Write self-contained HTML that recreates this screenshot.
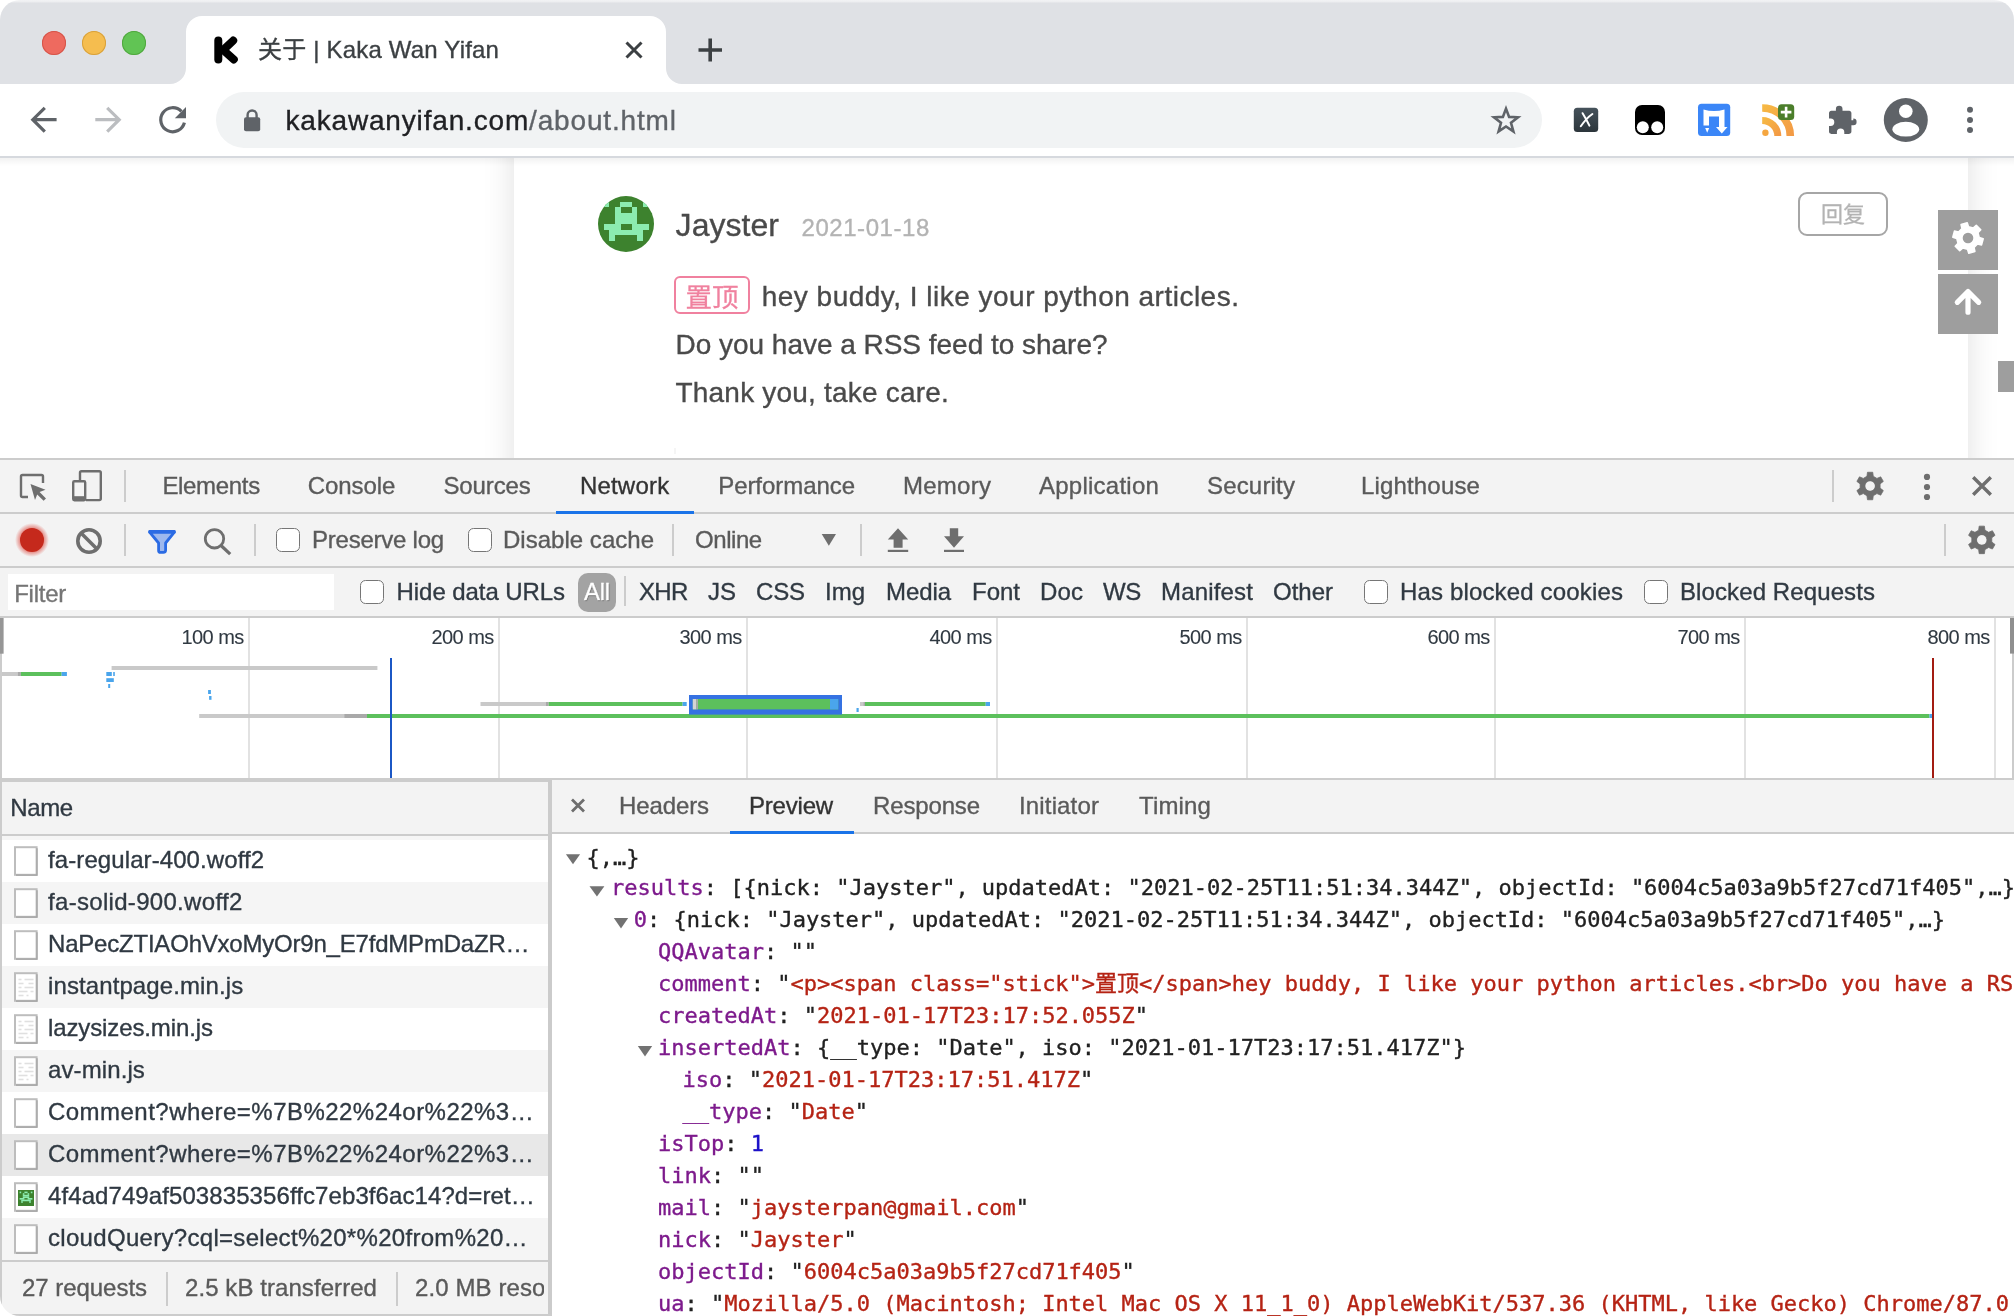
<!DOCTYPE html>
<html lang="zh-CN">
<head>
<meta charset="utf-8">
<title>关于 | Kaka Wan Yifan</title>
<style>
*{box-sizing:border-box;margin:0;padding:0}
html,body{width:2014px;height:1316px;overflow:hidden;background:#fff}
body{position:relative;font-family:"Liberation Sans","Noto Sans CJK SC",sans-serif;color:#333}
.abs{position:absolute}
.t{position:absolute;white-space:nowrap;line-height:1;-webkit-text-stroke:0.35px}
.m{position:absolute;white-space:pre;line-height:1;font-family:"Liberation Mono","Noto Sans CJK SC",monospace;font-size:22px;color:#212121}
.mo{font-family:"DejaVu Sans Mono","Liberation Mono","Noto Sans CJK SC",monospace;white-space:pre}
.k{color:#7d1a8c}.s{color:#b52314}.n{color:#1c10c8}
svg{position:absolute;overflow:visible}
.sep{position:absolute;width:2px;background:#ccc}
.hl{position:absolute;height:2px;background:#ccc;left:0;width:2014px}
.cb{position:absolute;width:24px;height:23.6px;border:1.9px solid #767676;border-radius:5.5px;background:#fff}
.dt{font-size:24px;color:#5a5a5a}
.row{position:absolute;left:2px;width:546px;height:42px}
.ic{position:absolute;left:12px;top:8px;width:24px;height:28px;border:2px solid #c4c4c4;border-radius:2px;background:#fff;box-shadow:1px 1px 0 #ddd}
</style>
</head>
<body>
<!-- ===== browser window chrome ===== -->
<div class="abs" style="left:0;top:0;width:2014px;height:84px;border-radius:20px 20px 0 0;background:linear-gradient(#f2f2f4 0,#eff0f2 1.4px,#dfe1e5 3.2px,#dfe1e5 100%)"></div>
<!-- traffic lights -->
<div class="abs" style="left:42px;top:31px;width:24px;height:24px;border-radius:50%;background:#ee6a5f;box-shadow:inset 0 0 0 1px #d5554a"></div>
<div class="abs" style="left:82px;top:31px;width:24px;height:24px;border-radius:50%;background:#f5bd4f;box-shadow:inset 0 0 0 1px #d8a13c"></div>
<div class="abs" style="left:122px;top:31px;width:24px;height:24px;border-radius:50%;background:#61c454;box-shadow:inset 0 0 0 1px #51a73f"></div>
<!-- active tab -->
<svg style="left:0;top:0" width="2014" height="84" viewBox="0 0 2014 84">
  <path d="M170 84 A16 16 0 0 0 186 68 L186 32 A16 16 0 0 1 202 16 L650 16 A16 16 0 0 1 666 32 L666 68 A16 16 0 0 0 682 84 Z" fill="#fff"/>
  <!-- favicon K -->
  <g stroke="#000" stroke-width="8" stroke-linecap="round" stroke-linejoin="round" fill="none">
    <path d="M218.3 40.4 L218.3 59.4"/>
    <path d="M233.2 40.6 L223.2 50 L233.8 59.4"/>
  </g>
  <!-- tab close -->
  <g stroke="#3c4043" stroke-width="3" stroke-linecap="butt">
    <path d="M626.5 42.5 L641.5 57.5 M641.5 42.5 L626.5 57.5"/>
  </g>
  <!-- new tab plus -->
  <g stroke="#3c4043" stroke-width="3.6">
    <path d="M698.5 50 L722 50 M710.2 38.5 L710.2 61.5"/>
  </g>
</svg>
<!-- toolbar -->
<div class="abs" style="left:0;top:84px;width:2014px;height:72px;background:#fff"></div>
<div class="abs" style="left:0;top:156px;width:2014px;height:2px;background:#d6d9de"></div>
<div class="abs" style="left:0;top:158px;width:2014px;height:7px;background:linear-gradient(rgba(0,0,0,.045),rgba(0,0,0,0))"></div>
<div class="abs" style="left:216px;top:92px;width:1326px;height:56px;border-radius:28px;background:#f1f3f4"></div>
<svg style="left:0;top:84px" width="2014" height="72" viewBox="0 84 2014 72">
  <!-- back -->
  <g stroke="#5f6368" stroke-width="3.2" fill="none" stroke-linecap="butt" stroke-linejoin="miter">
    <path d="M56.6 119.7 L33 119.7 M44.8 107.8 L32.8 119.7 L44.8 131.6"/>
  </g>
  <!-- forward -->
  <g stroke="#bbbdc0" stroke-width="3.2" fill="none">
    <path d="M95.3 119.7 L119 119.7 M107.2 107.8 L119.2 119.7 L107.2 131.6"/>
  </g>
  <!-- reload -->
  <g fill="none" stroke="#5f6368" stroke-width="3.2">
    <path d="M181.4 111.4 A12 12 0 1 0 184.4 122.6"/>
  </g>
  <path d="M186 107 L186 118.2 L174.8 118.2 Z" fill="#5f6368"/>
  <!-- lock -->
  <rect x="244" y="117.2" width="16.2" height="14" rx="2" fill="#5f6368"/>
  <path d="M247.6 118 L247.6 115 A4.5 4.5 0 0 1 256.6 115 L256.6 118" fill="none" stroke="#5f6368" stroke-width="2.4"/>
  <!-- star -->
  <path d="M1506.0 108.6 L1509.1 116.9 L1518.0 117.3 L1511.0 122.8 L1513.4 131.4 L1506.0 126.5 L1498.6 131.4 L1501.0 122.8 L1494.0 117.3 L1502.9 116.9 Z" fill="none" stroke="#5f6368" stroke-width="2.6" stroke-linejoin="miter"/>
  <!-- ext 1: dark X -->
  <defs><linearGradient id="gx" x1="0" y1="0" x2="0" y2="1"><stop offset="0" stop-color="#46525b"/><stop offset="1" stop-color="#2c353b"/></linearGradient>
  <linearGradient id="grss" x1="0" y1="0" x2="1" y2="1"><stop offset="0" stop-color="#f6b844"/><stop offset="1" stop-color="#f39a45"/></linearGradient></defs>
  <rect x="1573.8" y="107.8" width="24.4" height="24.2" rx="3.5" fill="url(#gx)"/>
  <path d="M1580.8 126.3 Q1586.5 118 1592.4 114 M1582.6 113.2 Q1586.5 119.5 1589.4 125.6" stroke="#fff" stroke-width="2" fill="none" stroke-linecap="round"/>
  <!-- ext 2: tampermonkey -->
  <rect x="1635" y="105" width="30" height="30" rx="7" fill="#000"/>
  <circle cx="1642.8" cy="127.2" r="6" fill="#fff"/><circle cx="1657.2" cy="127.2" r="6" fill="#fff"/>
  <!-- ext 3: blue -->
  <rect x="1698" y="103.8" width="32.2" height="32.3" rx="3.5" fill="#3b86f7"/>
  <path d="M1703.5 109.5 Q1714 112.5 1724.5 109.5 L1724.5 127 L1727.5 127 L1721.8 133.5 L1716 127 L1719 127 L1719 116.5 L1709 116.5 L1709 125.5 L1703.5 125.5 Z" fill="#fff"/>
  <path d="M1705.2 128 L1709.2 128 L1707.2 132.8 Z" fill="#fff"/>
  <!-- ext 4: rss -->
  <g fill="none" stroke="url(#grss)">
    <path d="M1762.2 108 A28 28 0 0 1 1790.3 136" stroke-width="7.6"/>
    <path d="M1762.2 120.4 A15.7 15.7 0 0 1 1777.8 136" stroke-width="7"/>
  </g>
  <circle cx="1765.4" cy="132.7" r="3.2" fill="#f5a640"/>
  <rect x="1778" y="104.2" width="16.2" height="15.8" rx="3.5" fill="#4b7e2b"/>
  <path d="M1780.8 112.1 L1791.4 112.1 M1786.1 106.8 L1786.1 117.4" stroke="#fff" stroke-width="2.6"/>
  <!-- puzzle -->
  <path transform="translate(0.8 1.6)" d="M1852.5 118.6 h-1.9 v-7.2 c0 -1.3 -1 -2.3 -2.3 -2.3 h-6.6 v-1.7 a3.3 3.3 0 0 0 -6.6 0 v1.7 h-4.6 c-1.3 0 -2.3 1 -2.3 2.3 v5.6 h1.6 a3.7 3.7 0 0 1 0 7.4 h-1.6 v5.6 c0 1.3 1 2.3 2.3 2.3 h5.6 v-1.6 a3.7 3.7 0 0 1 7.4 0 v1.6 h4.8 c1.3 0 2.3 -1 2.3 -2.3 v-6.4 h1.9 a3.3 3.3 0 0 0 0 -6.6 z" fill="#5f6368"/>
  <!-- profile -->
  <clipPath id="cpf"><circle cx="1905.8" cy="120" r="22"/></clipPath>
  <circle cx="1905.8" cy="120" r="22" fill="#5f6368"/>
  <circle cx="1905.8" cy="111.3" r="6.8" fill="#fff"/>
  <ellipse cx="1905.8" cy="129.2" rx="13.4" ry="7.4" fill="#fff" clip-path="url(#cpf)"/>
  <!-- menu dots -->
  <circle cx="1970" cy="109.8" r="3" fill="#5f6368"/><circle cx="1970" cy="120" r="3" fill="#5f6368"/><circle cx="1970" cy="130.1" r="3" fill="#5f6368"/>
</svg>
<!-- ===== page content ===== -->
<div class="abs" style="left:0;top:158px;width:2014px;height:300px;overflow:hidden;background:#fff;will-change:transform">
  <div class="abs" style="left:514px;top:-40px;width:1454px;height:400px;background:#fff;box-shadow:0 0 30px rgba(0,0,0,.125)"></div>
  <div class="abs" style="left:0;top:0;width:2014px;height:8px;background:linear-gradient(rgba(0,0,0,.05),rgba(0,0,0,0))"></div>
  <!-- avatar -->
  <svg style="left:598px;top:38px" width="56" height="56" viewBox="0 0 56 56">
    <clipPath id="cav"><circle cx="28" cy="28" r="28"/></clipPath>
    <g clip-path="url(#cav)"><rect width="56" height="56" fill="#3d822e"/><g fill="#8cecb0" shape-rendering="crispEdges"><rect x="5.6" y="5.6" width="5.75" height="5.75"/><rect x="22.4" y="5.6" width="11.35" height="5.75"/><rect x="44.8" y="5.6" width="5.75" height="5.75"/><rect x="16.8" y="11.2" width="5.75" height="5.75"/><rect x="33.6" y="11.2" width="5.75" height="5.75"/><rect x="16.8" y="16.8" width="22.55" height="5.75"/><rect x="16.8" y="22.4" width="22.55" height="5.75"/><rect x="5.6" y="28.0" width="16.95" height="5.75"/><rect x="33.6" y="28.0" width="16.95" height="5.75"/><rect x="11.2" y="33.6" width="33.75" height="5.75"/><rect x="11.2" y="39.2" width="5.75" height="5.75"/><rect x="39.2" y="39.2" width="5.75" height="5.75"/></g></g>
  </svg>
  <!-- sticky badge -->
  <div class="abs" style="left:674.4px;top:118.4px;width:75.4px;height:37.2px;border:2px solid #f0819f;border-radius:6px;color:#f0819f;font-size:26.5px;line-height:36px;-webkit-text-stroke:0.3px;text-align:center;font-family:'Noto Sans CJK SC',sans-serif;font-weight:400;-webkit-text-stroke:0.3px">置顶</div>
  <!-- reply button -->
  <div class="abs" style="left:1798px;top:34px;width:90px;height:44px;border:2px solid #a6a6a6;border-radius:9px;color:#b3b3b3;font-size:22px;line-height:36px;-webkit-text-stroke:0.3px;text-align:center;font-family:'Noto Sans CJK SC',sans-serif">回复</div>
  <!-- side buttons -->
  <div class="abs" style="left:1938px;top:52px;width:60px;height:60px;background:#9e9e9e"></div>
  <div class="abs" style="left:1938px;top:116px;width:60px;height:60px;background:#9e9e9e"></div>
  <svg style="left:1938px;top:52px" width="60" height="124" viewBox="0 0 60 124">
    <path fill="#fff" fill-rule="evenodd" stroke="#fff" stroke-width="1.6" stroke-linejoin="round" d="M41.19 27.53 L45.18 28.80 L43.54 34.90 L39.46 34.00 L36.00 37.46 L36.90 41.54 L30.80 43.18 L29.53 39.19 L24.81 37.93 L21.72 40.75 L17.25 36.28 L20.07 33.19 L18.81 28.47 L14.82 27.20 L16.46 21.10 L20.54 22.00 L24.00 18.54 L23.10 14.46 L29.20 12.82 L30.47 16.81 L35.19 18.07 L38.28 15.25 L42.75 19.72 L39.93 22.81 Z M35.30 28.00 A5.3 5.3 0 1 0 24.70 28.00 A5.3 5.3 0 1 0 35.30 28.00 Z"/>
    <circle cx="30" cy="28" r="5.3" fill="#9e9e9e"/>
    <g stroke="#fff" stroke-width="5.2" fill="none" stroke-linecap="round" stroke-linejoin="round">
      <path d="M30 81.6 L30 102.2 M19.3 92.3 L30 81.6 L40.7 92.3"/>
    </g>
  </svg>
  <!-- page scrollbar thumb -->
  <div class="abs" style="left:1998px;top:202.5px;width:16px;height:31.5px;background:#9e9e9e"></div>
  <div class="abs" style="left:674px;top:290px;width:2px;height:6px;background:#f5f5f5"></div>
</div>
<!-- ===== devtools toolbars ===== -->
<div class="abs" style="left:0;top:458px;width:2014px;height:858px;background:#f3f3f3"></div>
<div class="hl" style="top:458px"></div>
<div class="hl" style="top:512px"></div>
<div class="hl" style="top:566px"></div>
<div class="hl" style="top:616px"></div>
<div class="abs" style="left:556px;top:511px;width:138px;height:3px;background:#1a73e8"></div>
<div class="sep" style="left:124px;top:470px;height:32px"></div>
<div class="sep" style="left:1832px;top:470px;height:32px"></div>
<div class="sep" style="left:124px;top:524px;height:32px"></div>
<div class="sep" style="left:254px;top:524px;height:32px"></div>
<div class="sep" style="left:672px;top:524px;height:32px"></div>
<div class="sep" style="left:860px;top:524px;height:32px"></div>
<div class="sep" style="left:1944px;top:524px;height:32px"></div>
<div class="sep" style="left:624px;top:576px;height:30px"></div>
<svg style="left:0;top:458px" width="2014" height="160" viewBox="0 458 2014 160">
  <!-- inspect -->
  <g fill="none" stroke="#6e6e6e" stroke-width="2.4" stroke-linejoin="round">
    <path d="M28 497 L22.5 497 Q21 497 21 495.5 L21 476.5 Q21 475 22.5 475 L41.5 475 Q43 475 43 476.5 L43 483"/>
  </g>
  <path d="M30.5 484 L45.5 489.8 L39.6 492 L46 498.4 L43.6 500.8 L37.2 494.4 L35 500 Z" fill="#6e6e6e"/>
  <!-- device -->
  <g fill="none" stroke="#6e6e6e" stroke-width="2.4" stroke-linejoin="round">
    <path d="M80 480 L80 472.7 Q80 471.2 81.5 471.2 L99.3 471.2 Q100.8 471.2 100.8 472.7 L100.8 498.6 Q100.8 500.1 99.3 500.1 L86 500.1"/>
    <rect x="73.2" y="481.2" width="12" height="19" rx="1.2"/>
  </g>
  <rect x="73.2" y="496.2" width="12" height="4" fill="#6e6e6e"/>
  <!-- gear / dots / close -->
  <path d="M1873.25 495.70 L1872.72 499.75 L1867.48 499.75 L1866.95 495.70 L1863.27 493.58 L1859.50 495.15 L1856.88 490.60 L1860.12 488.12 L1860.12 483.88 L1856.88 481.40 L1859.50 476.85 L1863.27 478.42 L1866.95 476.30 L1867.48 472.25 L1872.72 472.25 L1873.25 476.30 L1876.93 478.42 L1880.70 476.85 L1883.32 481.40 L1880.08 483.88 L1880.08 488.12 L1883.32 490.60 L1880.70 495.15 L1876.93 493.58 Z M1875.10 486.00 A5 5 0 1 0 1865.10 486.00 A5 5 0 1 0 1875.10 486.00 Z" fill="#6e6e6e" fill-rule="evenodd" stroke="#6e6e6e" stroke-width="0.8" stroke-linejoin="round"/>
  <circle cx="1870.1" cy="486" r="4.6" fill="#f3f3f3"/>
  <circle cx="1927" cy="476.9" r="3.1" fill="#6e6e6e"/><circle cx="1927" cy="487" r="3.1" fill="#6e6e6e"/><circle cx="1927" cy="497" r="3.1" fill="#6e6e6e"/>
  <path d="M1973.2 477.2 L1990.8 494.8 M1990.8 477.2 L1973.2 494.8" stroke="#6e6e6e" stroke-width="3.4" fill="none"/>
  <path d="M1984.95 549.60 L1984.42 553.65 L1979.18 553.65 L1978.65 549.60 L1974.97 547.48 L1971.20 549.05 L1968.58 544.50 L1971.82 542.02 L1971.82 537.78 L1968.58 535.30 L1971.20 530.75 L1974.97 532.32 L1978.65 530.20 L1979.18 526.15 L1984.42 526.15 L1984.95 530.20 L1988.63 532.32 L1992.40 530.75 L1995.02 535.30 L1991.78 537.78 L1991.78 542.02 L1995.02 544.50 L1992.40 549.05 L1988.63 547.48 Z M1986.80 539.90 A5 5 0 1 0 1976.80 539.90 A5 5 0 1 0 1986.80 539.90 Z" fill="#6e6e6e" fill-rule="evenodd" stroke="#6e6e6e" stroke-width="0.8" stroke-linejoin="round"/>
  <circle cx="1981.8" cy="539.9" r="4.6" fill="#f3f3f3"/>
  <!-- record -->
  <defs><radialGradient id="rg"><stop offset="0.68" stop-color="#d93025" stop-opacity=".55"/><stop offset="1" stop-color="#d93025" stop-opacity="0"/></radialGradient></defs>
  <circle cx="32" cy="540" r="17" fill="url(#rg)"/>
  <circle cx="32" cy="540" r="12" fill="#c5291c"/>
  <!-- clear -->
  <circle cx="89" cy="541" r="11.2" fill="none" stroke="#6e6e6e" stroke-width="3.6"/>
  <path d="M81 533 L97 549" stroke="#6e6e6e" stroke-width="3.6"/>
  <!-- filter funnel -->
  <path d="M149.6 532.2 L174.4 532.2 L165.6 543 L165.6 550.4 Q165.4 552.4 163.4 552.4 L160.6 552.4 Q158.6 552.4 158.6 550.4 L158.6 543 Z" fill="#9db8ee" stroke="#2b6be4" stroke-width="2.8" stroke-linejoin="round"/>
  <rect x="148.4" y="530" width="27.2" height="3.6" rx="1" fill="#2b6be4"/>
  <!-- search -->
  <circle cx="214.5" cy="538.8" r="9.2" fill="none" stroke="#6e6e6e" stroke-width="2.8"/>
  <path d="M221 545.5 L230.2 554.2" stroke="#6e6e6e" stroke-width="3.2"/>
  <!-- dropdown -->
  <path d="M821.7 534 L836 534 L828.85 545.8 Z" fill="#6e6e6e"/>
  <!-- upload / download -->
  <path d="M898 528.2 L908.2 539.4 L902.6 539.4 L902.6 547.8 L893.6 547.8 L893.6 539.4 L887.8 539.4 Z" fill="#6e6e6e"/>
  <rect x="887.8" y="549.8" width="20.4" height="2.2" fill="#6e6e6e"/>
  <path d="M949.8 528.2 L958.2 528.2 L958.2 536.2 L964 536.2 L954 547.8 L944 536.2 L949.8 536.2 Z" fill="#6e6e6e"/>
  <rect x="944" y="549.8" width="20" height="2.2" fill="#6e6e6e"/>
</svg>
<!-- checkboxes -->
<div class="cb" style="left:276px;top:528.2px"></div>
<div class="cb" style="left:468px;top:528.2px"></div>
<div class="cb" style="left:360px;top:580.2px"></div>
<div class="cb" style="left:1364px;top:580.2px"></div>
<div class="cb" style="left:1644px;top:580.2px"></div>
<!-- filter input -->
<div class="abs" style="left:8px;top:574px;width:326px;height:36px;background:#fff"></div>
<!-- All pill -->
<div class="abs" style="left:578px;top:572.5px;width:38px;height:39.5px;border-radius:10px;background:#a3a3a3"></div>
<!-- ===== network overview ===== -->
<div class="abs" style="left:0;top:618px;width:2014px;height:160px;background:#fff"></div>
<svg style="left:0;top:618px" width="2014" height="164" viewBox="0 618 2014 164">
<rect x="248" y="618" width="2.0" height="160.0" fill="#e2e2e2"/><rect x="498" y="618" width="2.0" height="160.0" fill="#e2e2e2"/><rect x="746" y="618" width="2.0" height="160.0" fill="#e2e2e2"/><rect x="996" y="618" width="2.0" height="160.0" fill="#e2e2e2"/><rect x="1246" y="618" width="2.0" height="160.0" fill="#e2e2e2"/><rect x="1494" y="618" width="2.0" height="160.0" fill="#e2e2e2"/><rect x="1744" y="618" width="2.0" height="160.0" fill="#e2e2e2"/><rect x="1994" y="618" width="2.0" height="160.0" fill="#e2e2e2"/>
<rect x="111.6" y="666" width="265.8" height="4.0" fill="#c9c9c9"/><rect x="2" y="672" width="15.5" height="4.0" fill="#c9c9c9"/><rect x="17.5" y="672" width="3.4" height="4.0" fill="#a9a9a9"/><rect x="20.9" y="672" width="40.7" height="4.0" fill="#5cc05c"/><rect x="61.6" y="672" width="5.3" height="4.0" fill="#4aa5ec"/><rect x="106.3" y="672" width="5.5" height="4.0" fill="#4aa5ec"/><rect x="113.2" y="672" width="1.6" height="4.0" fill="#4aa5ec"/><rect x="106.3" y="678.2" width="7.5" height="3.8" fill="#4aa5ec"/><rect x="108.2" y="684" width="2.0" height="4.0" fill="#4aa5ec"/><rect x="208.1" y="690" width="2.8" height="4.0" fill="#4aa5ec"/><rect x="209.1" y="696" width="2.4" height="3.8" fill="#4aa5ec"/><rect x="199.2" y="714" width="145.0" height="4.0" fill="#c9c9c9"/><rect x="344.2" y="714" width="22.8" height="4.0" fill="#a9a9a9"/><rect x="367" y="714" width="1562.5" height="4.0" fill="#5cc05c"/><rect x="1929.5" y="714" width="2.5" height="4.0" fill="#4aa5ec"/><rect x="480.5" y="702" width="65.5" height="4.0" fill="#c9c9c9"/><rect x="546" y="702" width="2.7" height="4.0" fill="#a9a9a9"/><rect x="548.7" y="702" width="133.9" height="4.0" fill="#5cc05c"/><rect x="682.6" y="702" width="4.1" height="4.0" fill="#4aa5ec"/><rect x="856.5" y="708" width="2.2" height="4.0" fill="#4aa5ec"/><rect x="860" y="702" width="3.3" height="4.0" fill="#c9c9c9"/><rect x="863.3" y="702" width="1.7" height="4.0" fill="#a9a9a9"/><rect x="865" y="702" width="120.7" height="4.0" fill="#5cc05c"/><rect x="985.7" y="702" width="4.3" height="4.0" fill="#4aa5ec"/>
<rect x="689" y="695" width="153.0" height="19.6" fill="#3572e2"/><rect x="692.8" y="699" width="145.4" height="10.4" fill="#5cc05c"/><rect x="692.8" y="699" width="3.4" height="10.4" fill="#d4d4d4"/><rect x="696.2" y="699" width="1.8" height="10.4" fill="#a9a9a9"/><rect x="830" y="699" width="8.2" height="10.4" fill="#4aa5ec"/>
<rect x="390" y="658" width="2.0" height="120.0" fill="#1b57c5"/>
<rect x="1932" y="658" width="2.0" height="120.0" fill="#a31c12"/>
<rect x="0" y="618" width="2.0" height="164.0" fill="#ccc"/>
<rect x="0" y="618" width="3.6" height="35.7" fill="#969696"/>
<rect x="2012" y="653" width="2" height="125" fill="#ccc"/><rect x="2010" y="618" width="4.0" height="35.6" fill="#8f8f8f"/>
<rect x="0" y="778" width="2014.0" height="2.0" fill="#ccc"/>
<rect x="0" y="780" width="550.0" height="2.0" fill="#ccc"/>
</svg>
<!-- ===== request list ===== -->
<div class="abs" style="left:2px;top:782px;width:546px;height:52px;background:#f3f3f3"></div>
<div class="abs" style="left:2px;top:834px;width:546px;height:2px;background:#ccc"></div>
<div class="abs" style="left:2px;top:836px;width:546px;height:4px;background:#f5f5f5"></div>
<div class="row" style="top:840px;background:#fff"></div><div class="row" style="top:882px;background:#f5f5f5"></div><div class="row" style="top:924px;background:#fff"></div><div class="row" style="top:966px;background:#f5f5f5"></div><div class="row" style="top:1008px;background:#fff"></div><div class="row" style="top:1050px;background:#f5f5f5"></div><div class="row" style="top:1092px;background:#fff"></div><div class="row" style="top:1134px;background:#e8e8e8"></div><div class="row" style="top:1176px;background:#fff"></div><div class="row" style="top:1218px;background:#f5f5f5"></div>
<div class="abs" style="left:0;top:782px;width:2px;height:534px;background:#ccc"></div>
<div class="abs" style="left:548px;top:780px;width:4px;height:536px;background:#cbcbcb"></div>
<div class="abs" style="left:2px;top:1260px;width:546px;height:2px;background:#ccc"></div>
<div class="abs" style="left:2px;top:1262px;width:546px;height:54px;background:#f3f3f3"></div>
<div class="sep" style="left:166px;top:1272px;height:34px"></div>
<div class="sep" style="left:396px;top:1272px;height:34px"></div>
<div class="abs" style="left:0;top:1314px;width:552px;height:2px;background:#ccc"></div>
<svg style="left:0;top:1290px" width="26" height="26" viewBox="0 0 26 26"><path d="M0 6 L0 26 L20 26 A20 20 0 0 1 0 6 Z" fill="#fff"/></svg>
<svg style="left:0;top:836px" width="60" height="430" viewBox="0 836 60 430"><rect x="15" y="847.2" width="21.6" height="27.6" fill="#fff" stroke="#bdbdbd" stroke-width="2"/><path d="M16 875.2 L37.0 875.2 L37.0 848.2" fill="none" stroke="#a2a2a2" stroke-width="1.2"/><rect x="15" y="889.2" width="21.6" height="27.6" fill="#fff" stroke="#bdbdbd" stroke-width="2"/><path d="M16 917.2 L37.0 917.2 L37.0 890.2" fill="none" stroke="#a2a2a2" stroke-width="1.2"/><rect x="15" y="931.2" width="21.6" height="27.6" fill="#fff" stroke="#bdbdbd" stroke-width="2"/><path d="M16 959.2 L37.0 959.2 L37.0 932.2" fill="none" stroke="#a2a2a2" stroke-width="1.2"/><rect x="15" y="973.2" width="21.6" height="27.6" fill="#fff" stroke="#bdbdbd" stroke-width="2"/><path d="M16 1001.2 L37.0 1001.2 L37.0 974.2" fill="none" stroke="#a2a2a2" stroke-width="1.2"/><rect x="18.5" y="978.7" width="3.0" height="1.6" fill="#e0e0e0"/><rect x="24.5" y="978.7" width="9.0" height="1.6" fill="#e0e0e0"/><rect x="18.5" y="982.7" width="5.0" height="1.6" fill="#e0e0e0"/><rect x="28.5" y="982.7" width="5.0" height="1.6" fill="#e0e0e0"/><rect x="18.5" y="986.7" width="3.0" height="1.6" fill="#e0e0e0"/><rect x="24.5" y="986.7" width="9.0" height="1.6" fill="#e0e0e0"/><rect x="18.5" y="990.7" width="9.0" height="1.6" fill="#e0e0e0"/><rect x="30.5" y="990.7" width="3.0" height="1.6" fill="#e0e0e0"/><rect x="18.5" y="994.7" width="5.0" height="1.6" fill="#e0e0e0"/><rect x="26.5" y="994.7" width="2.0" height="1.6" fill="#e0e0e0"/><rect x="15" y="1015.2" width="21.6" height="27.6" fill="#fff" stroke="#bdbdbd" stroke-width="2"/><path d="M16 1043.2 L37.0 1043.2 L37.0 1016.2" fill="none" stroke="#a2a2a2" stroke-width="1.2"/><rect x="18.5" y="1020.7" width="3.0" height="1.6" fill="#e0e0e0"/><rect x="24.5" y="1020.7" width="9.0" height="1.6" fill="#e0e0e0"/><rect x="18.5" y="1024.7" width="5.0" height="1.6" fill="#e0e0e0"/><rect x="28.5" y="1024.7" width="5.0" height="1.6" fill="#e0e0e0"/><rect x="18.5" y="1028.7" width="3.0" height="1.6" fill="#e0e0e0"/><rect x="24.5" y="1028.7" width="9.0" height="1.6" fill="#e0e0e0"/><rect x="18.5" y="1032.7" width="9.0" height="1.6" fill="#e0e0e0"/><rect x="30.5" y="1032.7" width="3.0" height="1.6" fill="#e0e0e0"/><rect x="18.5" y="1036.7" width="5.0" height="1.6" fill="#e0e0e0"/><rect x="26.5" y="1036.7" width="2.0" height="1.6" fill="#e0e0e0"/><rect x="15" y="1057.2" width="21.6" height="27.6" fill="#fff" stroke="#bdbdbd" stroke-width="2"/><path d="M16 1085.2 L37.0 1085.2 L37.0 1058.2" fill="none" stroke="#a2a2a2" stroke-width="1.2"/><rect x="18.5" y="1062.7" width="3.0" height="1.6" fill="#e0e0e0"/><rect x="24.5" y="1062.7" width="9.0" height="1.6" fill="#e0e0e0"/><rect x="18.5" y="1066.7" width="5.0" height="1.6" fill="#e0e0e0"/><rect x="28.5" y="1066.7" width="5.0" height="1.6" fill="#e0e0e0"/><rect x="18.5" y="1070.7" width="3.0" height="1.6" fill="#e0e0e0"/><rect x="24.5" y="1070.7" width="9.0" height="1.6" fill="#e0e0e0"/><rect x="18.5" y="1074.7" width="9.0" height="1.6" fill="#e0e0e0"/><rect x="30.5" y="1074.7" width="3.0" height="1.6" fill="#e0e0e0"/><rect x="18.5" y="1078.7" width="5.0" height="1.6" fill="#e0e0e0"/><rect x="26.5" y="1078.7" width="2.0" height="1.6" fill="#e0e0e0"/><rect x="15" y="1099.2" width="21.6" height="27.6" fill="#fff" stroke="#bdbdbd" stroke-width="2"/><path d="M16 1127.2 L37.0 1127.2 L37.0 1100.2" fill="none" stroke="#a2a2a2" stroke-width="1.2"/><rect x="15" y="1141.2" width="21.6" height="27.6" fill="#fff" stroke="#bdbdbd" stroke-width="2"/><path d="M16 1169.2 L37.0 1169.2 L37.0 1142.2" fill="none" stroke="#a2a2a2" stroke-width="1.2"/><rect x="15" y="1183.2" width="21.6" height="27.6" fill="#fff" stroke="#bdbdbd" stroke-width="2"/><path d="M16 1211.2 L37.0 1211.2 L37.0 1184.2" fill="none" stroke="#a2a2a2" stroke-width="1.2"/><rect x="18" y="1190" width="16" height="16" fill="#3d822e"/><g fill="#8cecb0"><rect x="19.6" y="1191.6" width="1.6" height="1.65"/><rect x="24.4" y="1191.6" width="3.2" height="1.65"/><rect x="30.8" y="1191.6" width="1.6" height="1.65"/><rect x="22.8" y="1193.2" width="1.6" height="1.65"/><rect x="27.6" y="1193.2" width="1.6" height="1.65"/><rect x="22.8" y="1194.8" width="6.4" height="1.65"/><rect x="22.8" y="1196.4" width="6.4" height="1.65"/><rect x="19.6" y="1198.0" width="4.8" height="1.65"/><rect x="27.6" y="1198.0" width="4.8" height="1.65"/><rect x="21.2" y="1199.6" width="9.6" height="1.65"/><rect x="21.2" y="1201.2" width="1.6" height="1.65"/><rect x="29.2" y="1201.2" width="1.6" height="1.65"/></g><rect x="15" y="1225.2" width="21.6" height="27.6" fill="#fff" stroke="#bdbdbd" stroke-width="2"/><path d="M16 1253.2 L37.0 1253.2 L37.0 1226.2" fill="none" stroke="#a2a2a2" stroke-width="1.2"/></svg>
<!-- ===== detail pane ===== -->
<div class="abs" style="left:552px;top:780px;width:1462px;height:52px;background:#f3f3f3"></div>
<div class="abs" style="left:552px;top:832px;width:1462px;height:2px;background:#ccc"></div>
<div class="abs" style="left:730px;top:831px;width:124px;height:3px;background:#1a73e8"></div>
<div class="abs" style="left:552px;top:834px;width:1462px;height:482px;background:#fff"></div>
<svg style="left:552px;top:780px" width="1462" height="536" viewBox="552 780 1462 536">
  <path d="M572 799.4 L584 811.4 M584 799.4 L572 811.4" stroke="#6e6e6e" stroke-width="2.8" fill="none"/>
  <path d="M565.9 854.2 L580.1 854.2 L573.0 864.3 Z" fill="#727272"/><path d="M589.5 886.2 L604.4 886.2 L596.95 896.4 Z" fill="#727272"/><path d="M613.8 918 L628.2 918 L621.0 928.4 Z" fill="#727272"/><path d="M637.8 1046 L652.2 1046 L645.0 1056.4 Z" fill="#727272"/>
</svg>
<!-- ===== text ===== -->
<div class="abs" style="left:0;top:0;width:2014px;height:1316px;will-change:transform">
<div class="t" style="top:37.88px;font-size:24px;color:#3c4043;left:258.00px;letter-spacing:0.192px;">关于 | Kaka Wan Yifan</div>
<div class="t" style="top:106.80px;font-size:28px;color:#202124;left:285.40px;letter-spacing:0.835px;"><span style="color:#202124">kakawanyifan.com</span><span style="color:#5f6368">/about.html</span></div>
<div class="t" style="top:208.81px;font-size:32px;color:#4a4a4a;left:675.60px;letter-spacing:0.040px;">Jayster</div>
<div class="t" style="top:215.58px;font-size:24px;color:#b3b3b3;left:801.50px;letter-spacing:0.551px;">2021-01-18</div>
<div class="t" style="top:283.00px;font-size:28px;color:#4a4a4a;left:761.70px;letter-spacing:0.491px;">hey buddy, I like your python articles.</div>
<div class="t" style="top:331.10px;font-size:28px;color:#4a4a4a;left:675.50px;letter-spacing:-0.023px;">Do you have a RSS feed to share?</div>
<div class="t" style="top:379.10px;font-size:28px;color:#4a4a4a;left:675.50px;letter-spacing:0.207px;">Thank you, take care.</div>
<div class="t" style="top:473.88px;font-size:24px;color:#5a5a5a;left:162.40px;letter-spacing:-0.326px;">Elements</div>
<div class="t" style="top:473.88px;font-size:24px;color:#5a5a5a;left:307.80px;letter-spacing:-0.071px;">Console</div>
<div class="t" style="top:473.88px;font-size:24px;color:#5a5a5a;left:443.40px;letter-spacing:-0.115px;">Sources</div>
<div class="t" style="top:473.88px;font-size:24px;color:#333;left:579.90px;letter-spacing:0.211px;">Network</div>
<div class="t" style="top:473.88px;font-size:24px;color:#5a5a5a;left:718.20px;letter-spacing:-0.056px;">Performance</div>
<div class="t" style="top:473.88px;font-size:24px;color:#5a5a5a;left:903.00px;letter-spacing:0.241px;">Memory</div>
<div class="t" style="top:473.88px;font-size:24px;color:#5a5a5a;left:1039.00px;letter-spacing:0.246px;">Application</div>
<div class="t" style="top:473.88px;font-size:24px;color:#5a5a5a;left:1207.00px;letter-spacing:0.173px;">Security</div>
<div class="t" style="top:473.88px;font-size:24px;color:#5a5a5a;left:1361.00px;letter-spacing:0.164px;">Lighthouse</div>
<div class="t" style="top:527.68px;font-size:24px;color:#5a5a5a;left:312.00px;letter-spacing:-0.238px;">Preserve log</div>
<div class="t" style="top:527.68px;font-size:24px;color:#5a5a5a;left:503.00px;letter-spacing:0.020px;">Disable cache</div>
<div class="t" style="top:527.68px;font-size:24px;color:#5a5a5a;left:695.00px;letter-spacing:-0.432px;">Online</div>
<div class="t" style="top:582.08px;font-size:24px;color:#757575;left:14.20px;letter-spacing:-0.244px;">Filter</div>
<div class="t" style="top:580.18px;font-size:24px;color:#303942;left:396.60px;letter-spacing:-0.076px;">Hide data URLs</div>
<div class="t" style="top:580.18px;font-size:24px;color:#fff;left:584.00px;letter-spacing:-0.269px;text-shadow:0.6px 1px 1px rgba(0,0,0,.45);">All</div>
<div class="t" style="top:580.18px;font-size:24px;color:#303942;left:639.00px;letter-spacing:-0.669px;">XHR</div>
<div class="t" style="top:580.18px;font-size:24px;color:#303942;left:708.00px;letter-spacing:-0.010px;">JS</div>
<div class="t" style="top:580.18px;font-size:24px;color:#303942;left:756.00px;letter-spacing:-0.144px;">CSS</div>
<div class="t" style="top:580.18px;font-size:24px;color:#303942;left:825.00px;letter-spacing:-0.006px;">Img</div>
<div class="t" style="top:580.18px;font-size:24px;color:#303942;left:886.00px;letter-spacing:-0.083px;">Media</div>
<div class="t" style="top:580.18px;font-size:24px;color:#303942;left:972.00px;letter-spacing:-0.009px;">Font</div>
<div class="t" style="top:580.18px;font-size:24px;color:#303942;left:1040.00px;letter-spacing:0.125px;">Doc</div>
<div class="t" style="top:580.18px;font-size:24px;color:#303942;left:1103.00px;letter-spacing:-0.448px;">WS</div>
<div class="t" style="top:580.18px;font-size:24px;color:#303942;left:1161.00px;letter-spacing:0.173px;">Manifest</div>
<div class="t" style="top:580.18px;font-size:24px;color:#303942;left:1273.00px;letter-spacing:-0.007px;">Other</div>
<div class="t" style="top:580.18px;font-size:24px;color:#303942;left:1400.00px;letter-spacing:0.155px;">Has blocked cookies</div>
<div class="t" style="top:580.18px;font-size:24px;color:#303942;left:1680.00px;letter-spacing:0.100px;">Blocked Requests</div>
<div class="t" style="top:627.47px;font-size:20px;color:#303942;left:181.50px;letter-spacing:-0.562px;-webkit-text-stroke:0.1px;">100 ms</div>
<div class="t" style="top:627.47px;font-size:20px;color:#303942;left:431.50px;letter-spacing:-0.562px;-webkit-text-stroke:0.1px;">200 ms</div>
<div class="t" style="top:627.47px;font-size:20px;color:#303942;left:679.50px;letter-spacing:-0.562px;-webkit-text-stroke:0.1px;">300 ms</div>
<div class="t" style="top:627.47px;font-size:20px;color:#303942;left:929.50px;letter-spacing:-0.562px;-webkit-text-stroke:0.1px;">400 ms</div>
<div class="t" style="top:627.47px;font-size:20px;color:#303942;left:1179.50px;letter-spacing:-0.562px;-webkit-text-stroke:0.1px;">500 ms</div>
<div class="t" style="top:627.47px;font-size:20px;color:#303942;left:1427.50px;letter-spacing:-0.562px;-webkit-text-stroke:0.1px;">600 ms</div>
<div class="t" style="top:627.47px;font-size:20px;color:#303942;left:1677.50px;letter-spacing:-0.562px;-webkit-text-stroke:0.1px;">700 ms</div>
<div class="t" style="top:627.47px;font-size:20px;color:#303942;left:1927.50px;letter-spacing:-0.562px;-webkit-text-stroke:0.1px;">800 ms</div>
<div class="t" style="top:796.38px;font-size:24px;color:#303942;left:10.20px;letter-spacing:-0.352px;">Name</div>
<div class="t" style="top:847.78px;font-size:24px;color:#303942;left:48.00px;letter-spacing:0.094px;">fa-regular-400.woff2</div>
<div class="t" style="top:889.78px;font-size:24px;color:#303942;left:48.00px;letter-spacing:0.309px;">fa-solid-900.woff2</div>
<div class="t" style="top:931.78px;font-size:24px;color:#303942;left:48.00px;letter-spacing:-0.207px;">NaPecZTIAOhVxoMyOr9n_E7fdMPmDaZR…</div>
<div class="t" style="top:973.78px;font-size:24px;color:#303942;left:48.00px;letter-spacing:0.100px;">instantpage.min.js</div>
<div class="t" style="top:1015.78px;font-size:24px;color:#303942;left:48.00px;letter-spacing:-0.116px;">lazysizes.min.js</div>
<div class="t" style="top:1057.78px;font-size:24px;color:#303942;left:48.00px;letter-spacing:0.104px;">av-min.js</div>
<div class="t" style="top:1099.78px;font-size:24px;color:#303942;left:48.00px;letter-spacing:0.469px;">Comment?where=%7B%22%24or%22%3…</div>
<div class="t" style="top:1141.78px;font-size:24px;color:#303942;left:48.00px;letter-spacing:0.469px;">Comment?where=%7B%22%24or%22%3…</div>
<div class="t" style="top:1183.78px;font-size:24px;color:#303942;left:48.00px;letter-spacing:0.088px;">4f4ad749af503835356ffc7eb3f6ac14?d=ret…</div>
<div class="t" style="top:1225.78px;font-size:24px;color:#303942;left:48.00px;letter-spacing:0.306px;">cloudQuery?cql=select%20*%20from%20…</div>
<div class="t" style="top:1275.68px;font-size:24px;color:#5a5a5a;left:22.00px;letter-spacing:-0.040px;">27 requests</div>
<div class="t" style="top:1275.68px;font-size:24px;color:#5a5a5a;left:185.00px;letter-spacing:0.071px;">2.5 kB transferred</div>
<div class="t" style="top:1275.68px;font-size:24px;color:#5a5a5a;left:415.00px;letter-spacing:0.106px;width:129px;overflow:hidden;">2.0 MB resources</div>
<div class="t" style="top:794.18px;font-size:24px;color:#5a5a5a;left:619.00px;letter-spacing:-0.111px;">Headers</div>
<div class="t" style="top:794.18px;font-size:24px;color:#333;left:749.00px;letter-spacing:-0.209px;">Preview</div>
<div class="t" style="top:794.18px;font-size:24px;color:#5a5a5a;left:873.00px;letter-spacing:-0.144px;">Response</div>
<div class="t" style="top:794.18px;font-size:24px;color:#5a5a5a;left:1019.00px;letter-spacing:0.153px;">Initiator</div>
<div class="t" style="top:794.18px;font-size:24px;color:#5a5a5a;left:1139.00px;letter-spacing:0.159px;">Timing</div>
<div class="t mo" style="top:847.29px;font-size:22px;color:#212121;left:586.50px;letter-spacing:0.0px;">{,…}</div>
<div class="t mo" style="top:877.09px;font-size:22px;color:#212121;left:611.00px;letter-spacing:0.0px;"><span class="k">results</span>: [{nick: "Jayster", updatedAt: "2021-02-25T11:51:34.344Z", objectId: "6004c5a03a9b5f27cd71f405",…}</div>
<div class="t mo" style="top:909.19px;font-size:22px;color:#212121;left:633.70px;letter-spacing:0.0px;"><span class="k">0</span>: {nick: "Jayster", updatedAt: "2021-02-25T11:51:34.344Z", objectId: "6004c5a03a9b5f27cd71f405",…}</div>
<div class="t mo" style="top:941.19px;font-size:22px;color:#212121;left:658.00px;letter-spacing:0.0px;"><span class="k">QQAvatar</span>: ""</div>
<div class="t mo" style="top:973.19px;font-size:22px;color:#212121;left:658.00px;letter-spacing:0.0px;"><span class="k">comment</span>: "<span class="s">&lt;p&gt;&lt;span class="stick"&gt;置顶&lt;/span&gt;hey buddy, I like your python articles.&lt;br&gt;Do you have a RSS</span></div>
<div class="t mo" style="top:1005.19px;font-size:22px;color:#212121;left:658.00px;letter-spacing:0.0px;"><span class="k">createdAt</span>: "<span class="s">2021-01-17T23:17:52.055Z</span>"</div>
<div class="t mo" style="top:1037.19px;font-size:22px;color:#212121;left:658.00px;letter-spacing:0.0px;"><span class="k">insertedAt</span>: {__type: "Date", iso: "2021-01-17T23:17:51.417Z"}</div>
<div class="t mo" style="top:1069.19px;font-size:22px;color:#212121;left:682.50px;letter-spacing:0.0px;"><span class="k">iso</span>: "<span class="s">2021-01-17T23:17:51.417Z</span>"</div>
<div class="t mo" style="top:1101.19px;font-size:22px;color:#212121;left:682.50px;letter-spacing:0.0px;"><span class="k">__type</span>: "<span class="s">Date</span>"</div>
<div class="t mo" style="top:1133.19px;font-size:22px;color:#212121;left:658.00px;letter-spacing:0.0px;"><span class="k">isTop</span>: <span class="n">1</span></div>
<div class="t mo" style="top:1165.19px;font-size:22px;color:#212121;left:658.00px;letter-spacing:0.0px;"><span class="k">link</span>: ""</div>
<div class="t mo" style="top:1197.19px;font-size:22px;color:#212121;left:658.00px;letter-spacing:0.0px;"><span class="k">mail</span>: "<span class="s">jaysterpan@gmail.com</span>"</div>
<div class="t mo" style="top:1229.19px;font-size:22px;color:#212121;left:658.00px;letter-spacing:0.0px;"><span class="k">nick</span>: "<span class="s">Jayster</span>"</div>
<div class="t mo" style="top:1261.19px;font-size:22px;color:#212121;left:658.00px;letter-spacing:0.0px;"><span class="k">objectId</span>: "<span class="s">6004c5a03a9b5f27cd71f405</span>"</div>
<div class="t mo" style="top:1293.19px;font-size:22px;color:#212121;left:658.00px;letter-spacing:0.0px;"><span class="k">ua</span>: "<span class="s">Mozilla/5.0 (Macintosh; Intel Mac OS X 11_1_0) AppleWebKit/537.36 (KHTML, like Gecko) Chrome/87.0.4280.88</span></div>
</div>
</body>
</html>
